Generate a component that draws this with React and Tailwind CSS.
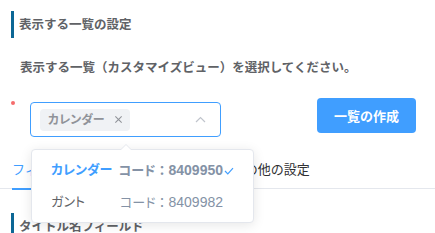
import React from "react";

function Code({ num }) {
  return (
    <span className="ml-auto whitespace-nowrap text-[#8492a6]">
      <span style={{ fontFeatureSettings: '"palt"' }}>コード</span>
      <span style={{ fontFeatureSettings: "normal" }}>：</span>
      <span className="text-[14px]">{num}</span>
    </span>
  );
}

export default function App() {
  const font = { fontFamily: '"Noto Sans CJK JP", "Noto Sans", sans-serif' };
  const mixed = { fontFamily: '"Liberation Sans", "Noto Sans CJK JP", sans-serif', fontFeatureSettings: '"palt"' };
  return (
    <div className="relative w-[435px] h-[233px] overflow-hidden bg-white" style={font}>
      {/* Section header */}
      <div className="ml-[11px] mt-[11px] flex h-[27px] items-center border-l-[3px] border-[#0c6795] pl-[5px] text-[12.5px] font-bold text-[#606266]">
        表示する一覧の設定
      </div>
      <div className="mt-[20px] pl-[20px] text-[12.5px] font-bold leading-[18px] text-[#606266]">
        表示する一覧（カスタマイズビュー）を選択してください。
      </div>

      {/* Row */}
      <div className="mt-[22px] flex items-start">
        <div className="ml-[11px] mt-[3px] h-[4px] w-[4px] rounded-full bg-[#f56c6c]"></div>
        <div className="ml-[15px] mt-[4px] flex h-[35px] w-[191px] items-center rounded-[4px] border border-[#409eff] pl-[9px] pr-[14px]">
          <div className="flex h-[22px] items-center rounded-[4px] bg-[#f0f2f5] pl-[8px] pr-[7px] text-[12px] font-bold text-[#909399]" style={mixed}>
            カレンダー
            <svg className="ml-[9px]" width="9" height="9" viewBox="0 0 10 10" fill="none" stroke="#909399" strokeWidth="1.2">
              <path d="M1.5 1.5 L8.5 8.5 M8.5 1.5 L1.5 8.5" />
            </svg>
          </div>
          <div className="flex-1"></div>
          <svg width="11" height="7" viewBox="0 0 11 7" fill="none" stroke="#c0c4cc" strokeWidth="1.2">
            <path d="M1 6 L5.5 1.5 L10 6" />
          </svg>
        </div>
        <button className="ml-[96px] flex h-[35px] w-[99px] items-center justify-center rounded-[4px] bg-[#409eff] text-[13px] font-bold text-white">
          一覧の作成
        </button>
      </div>

      {/* Tabs */}
      <div className="mt-[12px] flex h-[40px] border-b border-[#e4e7ed] pl-[12px]">
        <div className="relative flex h-[40px] items-center text-[13px] text-[#409eff]">
          フィールド設定
          <div className="absolute bottom-[-1px] left-0 right-0 h-[2px] bg-[#409eff]"></div>
        </div>
        <div className="ml-[40px] flex h-[40px] items-center text-[13px] text-[#303133]">表示設定</div>
        <div className="ml-[37px] flex h-[40px] items-center text-[13px] text-[#303133]">その他の設定</div>
      </div>

      {/* Section header 2 */}
      <div className="ml-[11px] mt-[24px] flex h-[27px] items-center border-l-[3px] border-[#0c6795] pl-[5px] text-[12.5px] font-bold text-[#606266]">
        タイトル名フィールド
      </div>

      {/* Dropdown */}
      <div className="absolute left-[31px] top-[149px] w-[223px] rounded-[4px] border border-[#e4e7ed] bg-white py-[4px] shadow-[0_2px_12px_0_rgba(0,0,0,0.1)]" style={mixed}>
        <div className="absolute left-[88px] top-[-6px] h-0 w-0 border-x-[6px] border-b-[6px] border-x-transparent border-b-[#e4e7ed]"></div>
        <div className="absolute left-[89px] top-[-5px] h-0 w-0 border-x-[5px] border-b-[5px] border-x-transparent border-b-white"></div>
        <div className="relative flex h-[32px] items-center pl-[19px] pr-[30px] text-[13px] font-bold">
          <span className="whitespace-nowrap text-[#409eff]">カレンダー</span>
          <Code num="8409950" />
          <svg className="absolute right-[19px] top-[13px]" width="10" height="8" viewBox="0 0 10 8" fill="none" stroke="#409eff" strokeWidth="1.2">
            <path d="M1 4 L3.8 6.8 L9 1.2" />
          </svg>
        </div>
        <div className="flex h-[32px] items-center pl-[19px] pr-[30px] text-[13px]">
          <span className="whitespace-nowrap text-[#606266]">ガント</span>
          <Code num="8409982" />
        </div>
      </div>
    </div>
  );
}
